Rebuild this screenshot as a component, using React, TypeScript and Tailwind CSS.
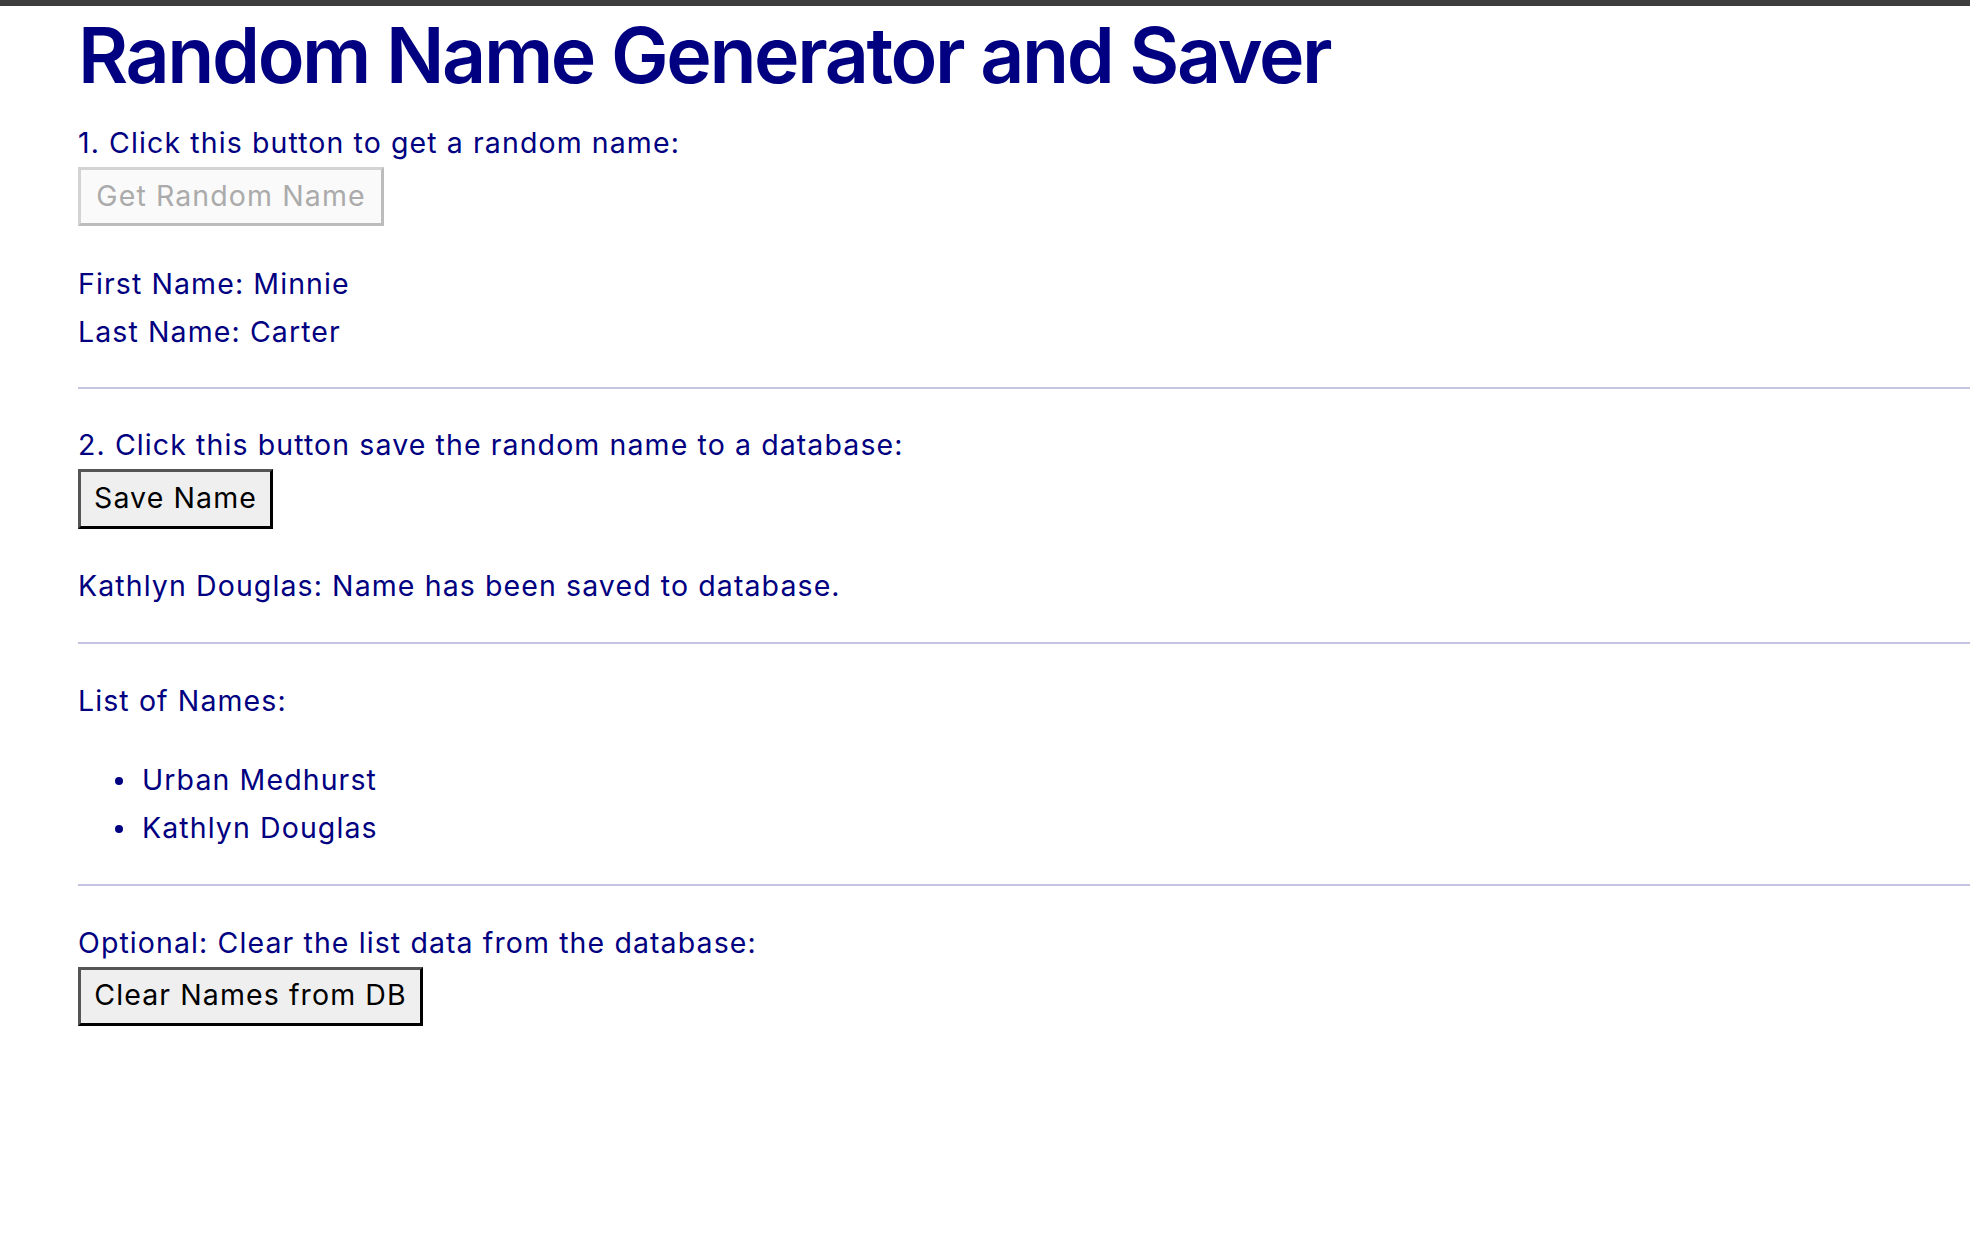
import { useState } from 'react';

const font = { fontFamily: 'Inter, "Noto Sans", sans-serif' };

export default function App() {
  const [firstName] = useState("Minnie");
  const [lastName] = useState("Carter");
  const [names] = useState(["Urban Medhurst", "Kathlyn Douglas"]);
  const [saved] = useState("Kathlyn Douglas");

  return (
    <div className="min-h-screen bg-white" style={font}>
      {/* browser frame edge */}
      <div className="h-[6px] bg-[#3d3d3d]" />

      <main className="pl-[78px] text-[#000080] text-[28.5px] leading-[48px] tracking-[1.1px]">
        <h1 className="mt-[10.5px] text-[77px] leading-[77px] font-semibold tracking-[-2.4px]">
          Random Name Generator and Saver
        </h1>

        {/* Step 1 */}
        <div className="mt-[25.5px]">1. Click this button to get a random name:</div>
        <button
          disabled
          className="block w-[306px] pt-[2px] pb-[3px] text-center text-[#ababab] bg-[#fafafa] border-[3px] border-t-[#d3d3d3] border-l-[#d3d3d3] border-b-[#bcbcbc] border-r-[#bcbcbc]"
        >
          Get Random Name
        </button>

        <div className="mt-[33.5px]">First Name: {firstName}</div>
        <div>Last Name: {lastName}</div>

        <hr className="mt-[31.5px] h-[2px] border-0 bg-[#c4c4e2]" />

        {/* Step 2 */}
        <div className="mt-[32px]">2. Click this button save the random name to a database:</div>
        <button className="block w-[195px] pt-[2px] pb-[4px] text-center text-black bg-[#efefef] border-[3px] border-t-[#555555] border-l-[#555555] border-b-black border-r-black">
          Save Name
        </button>

        <div className="mt-[32.5px]">{saved}: Name has been saved to database.</div>

        <hr className="mt-[32.5px] h-[2px] border-0 bg-[#c4c4e2]" />

        {/* Saved list */}
        <div className="mt-[32.5px]">List of Names:</div>
        <ul className="mt-[31px]">
          {names.map((n) => (
            <li key={n} className="flex items-start">
              <span className="mt-[21.5px] ml-[37px] w-[8px] h-[8px] rounded-full bg-[#000080]" />
              <span className="ml-[19px]">{n}</span>
            </li>
          ))}
        </ul>

        <hr className="mt-[32.5px] h-[2px] border-0 bg-[#c4c4e2]" />

        {/* Optional */}
        <div className="mt-[32.5px]">Optional: Clear the list data from the database:</div>
        <button className="block w-[345px] pt-[1px] pb-[4px] text-center text-black bg-[#efefef] border-[3px] border-t-[#555555] border-l-[#555555] border-b-black border-r-black">
          Clear Names from DB
        </button>
      </main>
    </div>
  );
}
